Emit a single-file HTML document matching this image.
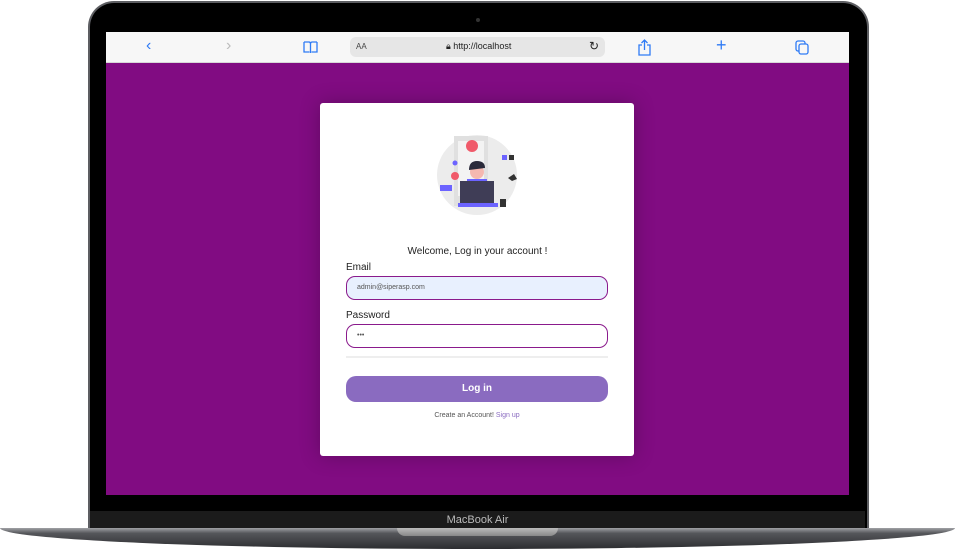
<!DOCTYPE html>
<html><head><style>
*{margin:0;padding:0;box-sizing:border-box}
body{width:955px;height:549px;background:#fff;position:relative;overflow:hidden;font-family:"Liberation Sans",Arial,sans-serif}
.body{position:absolute;left:88px;top:1px;width:781px;height:530px;background:#000;border-radius:26px 26px 0 0;border:2px solid #5d5e62;border-bottom:none}
.screen{position:absolute;left:106px;top:32px;width:743px;height:463px;background:#810c82}
.bar{position:absolute;left:0;top:0;width:100%;height:31px;background:#f7f7f7;border-bottom:1px solid #d8d8d8}
.url{position:absolute;left:244px;top:5px;width:255px;height:20px;background:#e6e6e6;border-radius:6px;font-size:9px;color:#222}
.ic{position:absolute;color:#2f7bf5;font-size:16px;top:5px}
.chin{position:absolute;left:90px;top:511px;width:775px;height:18px;background:#1b1b1b;color:#bbb;font-size:11px;text-align:center;line-height:18px}
.base{position:absolute;left:0;top:528px;width:955px;height:21px;background:linear-gradient(#a0a1a5,#55565a 25%,#2c2d30);border-radius:0 0 50% 50%/0 0 100% 100%}
.notch{position:absolute;left:397px;top:528px;width:161px;height:8px;background:linear-gradient(#bbb,#888);border-radius:0 0 8px 8px}
.card{position:absolute;left:320px;top:103px;width:314px;height:353px;background:#fff;border-radius:3px;box-shadow:0 0 20px rgba(0,0,0,.25)}
.lbl{position:absolute;left:26px;font-size:10px;color:#222}
.inp{position:absolute;left:26px;width:262px;height:24px;border:1.5px solid #8a1a8c;border-radius:9px;font-size:7px;color:#555;padding-left:10px;line-height:21px}
</style></head><body>
<div class="body"></div>
<div style="position:absolute;left:476px;top:18px;width:4px;height:4px;border-radius:50%;background:#333"></div>
<div class="screen">
 <div class="bar">
  <div class="ic" style="left:40px">&#8249;</div>
  <div class="ic" style="left:120px;color:#bbb">&#8250;</div>
  <svg style="position:absolute;left:197px;top:9px" width="15" height="13" viewBox="0 0 15 13"><path d="M1 1h5q1.5 0 1.5 2v9M14 1H9q-1.5 0-1.5 2M1 1v10h5.5M14 1v10H8.5" fill="none" stroke="#2f7bf5" stroke-width="1.3"/></svg>
  <div class="url"><span style="position:absolute;left:6px;top:5px;font-size:8px;color:#444">AA</span><span style="position:absolute;left:96px;top:4px">&#128274;&#xFE0E; http://localhost</span><span style="position:absolute;right:6px;top:2px;font-size:12px">&#8635;</span></div>
  <svg style="position:absolute;left:532px;top:7px" width="13" height="17" viewBox="0 0 13 17"><path d="M4 6H1v10h11V6H9M6.5 11V1M3.5 4l3-3 3 3" fill="none" stroke="#2f7bf5" stroke-width="1.3"/></svg>
  <div class="ic" style="left:610px;font-size:18px;top:3px">+</div>
  <svg style="position:absolute;left:689px;top:8px" width="14" height="15" viewBox="0 0 14 15"><rect x="1" y="1" width="9" height="10" rx="2" fill="none" stroke="#2f7bf5" stroke-width="1.3"/><rect x="4" y="4" width="9" height="10" rx="2" fill="#f7f7f7" stroke="#2f7bf5" stroke-width="1.3"/></svg>
 </div>
</div>
<div class="card">
 <svg style="position:absolute;left:112px;top:30px" width="90" height="82" viewBox="0 0 90 82">
  <circle cx="45" cy="42" r="40" fill="#ececec"/>
  <rect x="22" y="3" width="34" height="70" fill="#e0e0e0"/>
  <rect x="26" y="8" width="26" height="55" fill="#f3f3f3"/>
  <circle cx="40" cy="13" r="6" fill="#f05a6a"/>
  <rect x="8" y="52" width="12" height="6" fill="#6c63ff"/>
  <circle cx="23" cy="43" r="4" fill="#f05a6a"/><circle cx="23" cy="30" r="2.5" fill="#6c63ff"/>
  <rect x="70" y="22" width="5" height="5" fill="#6c63ff"/><rect x="77" y="22" width="5" height="5" fill="#333"/>
  <path d="M76 45l6-4 3 5-5 2z" fill="#333"/>
  <circle cx="45" cy="39" r="7" fill="#f5b8b0"/><path d="M37 37q0-9 8-9t8 7z" fill="#2a2a3a"/>
  <rect x="35" y="46" width="20" height="20" fill="#6c63ff"/>
  <rect x="28" y="48" width="34" height="24" fill="#3f3d56"/>
  <rect x="26" y="70" width="40" height="4" fill="#6c63ff"/>
  <rect x="68" y="66" width="6" height="8" fill="#333"/>
 </svg>
 <div style="position:absolute;top:143px;width:100%;text-align:center;font-size:10px;color:#222;padding-left:1px">Welcome, Log in your account !</div>
 <div class="lbl" style="top:159px">Email</div>
 <div class="inp" style="top:173px;background:#e8f0fe">admin@siperasp.com</div>
 <div class="lbl" style="top:207px">Password</div>
 <div class="inp" style="top:221px;background:#fff">•••</div>
 <div style="position:absolute;left:26px;top:253px;width:262px;height:2px;background:#eee"></div>
 <div style="position:absolute;left:26px;top:273px;width:262px;height:26px;background:#8a6bc0;border-radius:10px;color:#fff;font-size:10px;font-weight:bold;text-align:center;line-height:26px">Log in</div>
 <div style="position:absolute;top:309px;width:100%;text-align:center;font-size:7px;color:#555">Create an Account! <span style="color:#8a6bc0">Sign up</span></div>
</div>
<div class="chin">MacBook Air</div>
<div class="base"></div>
<div class="notch"></div>
</body></html>
